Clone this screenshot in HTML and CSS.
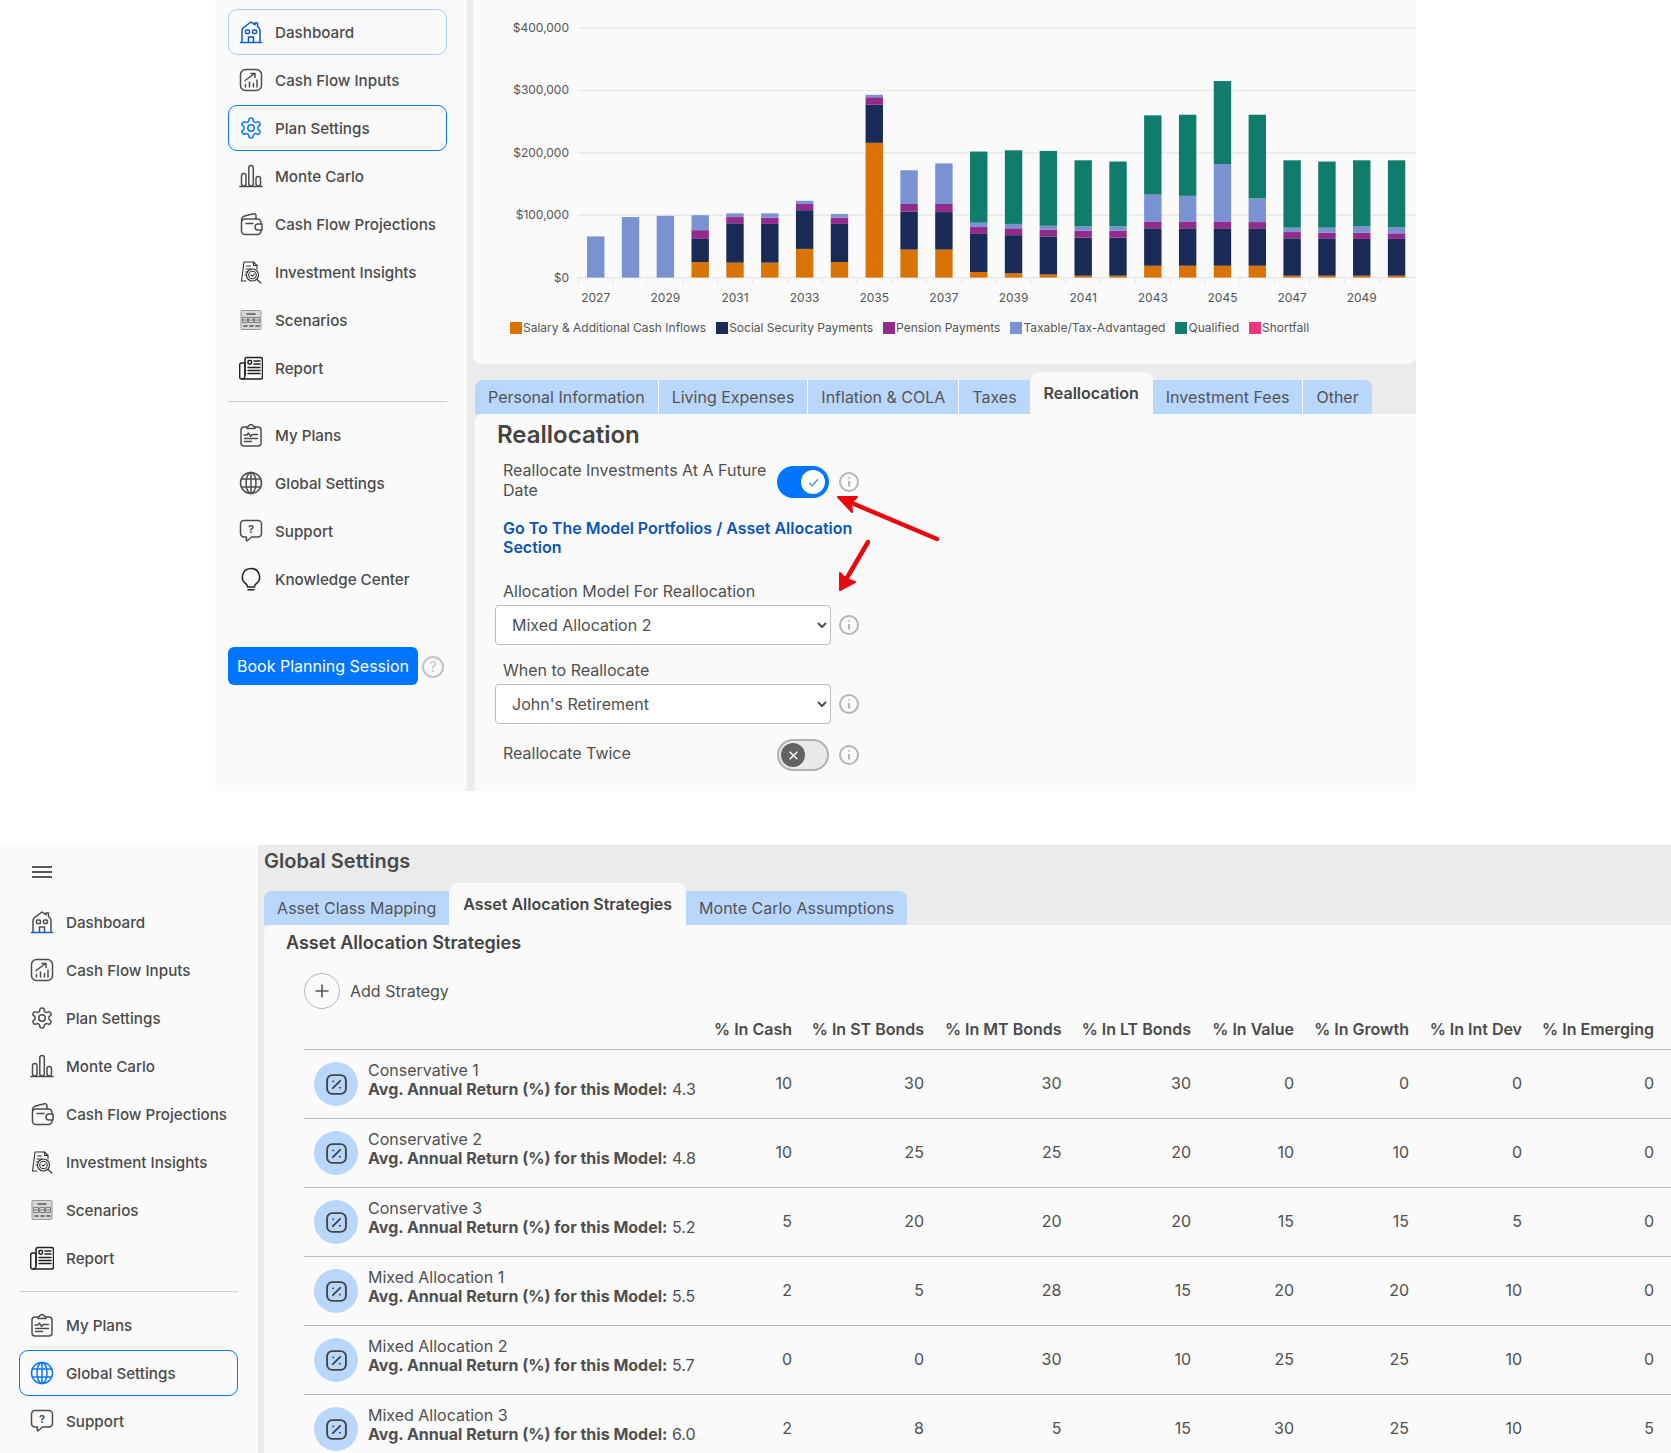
FILE: index.html
```html
<!DOCTYPE html>
<html lang="en">
<head>
    <meta charset="UTF-8">
    <meta name="viewport" content="width=device-width, initial-scale=1.0">
    <title>Plan Settings and Global Settings</title>
    <link rel="stylesheet" href="styles.css">
</head>
<body>
    <svg class="iconDefs" aria-hidden="true">
        <symbol id="i-home" viewBox="0 0 24 24">
            <path d="M3 22V10.5c0-1.2.5-2.200 1.500-2.900L12 2l4 2.800V3h2.500v3.500l1 .9c1 .8 1.500 1.900 1.500 3.100V22"/>
            <rect x="6.500" y="10" width="4" height="3.500" rx="1"/>
            <rect x="13.500" y="10" width="4" height="3.500" rx="1"/>
            <path d="M9.500 22v-5h5v5"/>
            <path d="M1.500 22.500h21" stroke="#0a66d8"/>
        </symbol>
        <symbol id="i-flow" viewBox="0 0 24 24">
            <rect x="1.500" y="1.500" width="21" height="21" rx="5"/>
            <path d="M6.500 19v-2.500M10.500 19v-5M14.500 19v-3.500M18 19v-7"/>
            <path d="M6 12.500l9-6.500M12 5.500h4v4"/>
        </symbol>
        <symbol id="i-gear" viewBox="0 0 24 24">
            <path d="M12.220 2h-.44a2 2 0 0 0-2 2v.18a2 2 0 0 1-1 1.730l-.43.25a2 2 0 0 1-2 0l-.15-.08a2 2 0 0 0-2.730.73l-.22.38a2 2 0 0 0 .73 2.730l.15.1a2 2 0 0 1 1 1.720v.51a2 2 0 0 1-1 1.740l-.15.09a2 2 0 0 0-.73 2.730l.22.38a2 2 0 0 0 2.730.73l.15-.08a2 2 0 0 1 2 0l.43.25a2 2 0 0 1 1 1.730V20a2 2 0 0 0 2 2h.44a2 2 0 0 0 2-2v-.18a2 2 0 0 1 1-1.730l.43-.25a2 2 0 0 1 2 0l.15.08a2 2 0 0 0 2.730-.73l.22-.39a2 2 0 0 0-.73-2.730l-.15-.08a2 2 0 0 1-1-1.740v-.5a2 2 0 0 1 1-1.740l.15-.09a2 2 0 0 0 .73-2.730l-.22-.38a2 2 0 0 0-2.730-.73l-.15.08a2 2 0 0 1-2 0l-.43-.25a2 2 0 0 1-1-1.730V4a2 2 0 0 0-2-2z"/>
            <circle cx="12" cy="12" r="3.200"/>
        </symbol>
        <symbol id="i-bars" viewBox="0 0 24 24">
            <rect x="2.500" y="9.500" width="4.500" height="12.500" rx="2.200"/>
            <rect x="9.800" y="1.500" width="4.500" height="20.500" rx="2.200"/>
            <rect x="17" y="12.500" width="4.500" height="9.500" rx="2.200"/>
            <path d="M.8 22.500h22.400"/>
        </symbol>
        <symbol id="i-wallet" viewBox="0 0 24 24">
            <path d="M2.500 9c0-3 1-4.500 3-5l9-2.200c1.500-.3 2.500.5 2.500 2V7"/>
            <path d="M22 12V10.500a3.500 3.500 0 0 0-3.500-3.500H6A3.500 3.500 0 0 0 2.500 10.500V19A3.500 3.500 0 0 0 6 22.500h12.500A3.500 3.500 0 0 0 22 19v-1"/>
            <path d="M23 12h-4a3 3 0 0 0 0 6h4zM7 11.500h7"/>
        </symbol>
        <symbol id="i-insight" viewBox="0 0 24 24">
            <path d="M7 21H2.500L5 2h9.500L18 5.500V9"/>
            <path d="M14.500 2v3.500H18M7.500 6h4M7 9h5M6.500 12h2M6 15h1.500"/>
            <circle cx="13.500" cy="15" r="6"/>
            <circle cx="13.500" cy="15" r="3.800"/>
            <path d="M12 15l1.200 1.200 2-2.200M18 19.500l4 3.500" />
        </symbol>
        <symbol id="i-scenario" viewBox="0 0 24 24">
            <rect x="2" y="2.500" width="20" height="19" rx="1" fill="#d6d6d6" stroke="#999" stroke-width="1"/>
            <path d="M8 6h8" stroke="#555"/>
            <path d="M4 9.500h4.500v5H4zM10 9.500h4.500v5H10zM16 9.500h4.500v5H16zM4 12h16.500" stroke="#777" stroke-width=".9"/>
            <path d="M5 18h3M11 18h3M17 18h3" stroke="#555"/>
        </symbol>
        <symbol id="i-report" viewBox="0 0 24 24">
            <path d="M6 19V3.500A2 2 0 0 1 8 1.500h13.500a2 2 0 0 1 2 2V21a2 2 0 0 1-2 2H3"/>
            <path d="M6 7H2.500a2 2 0 0 0-1.800 2v12a2 2 0 0 0 2 2 3 3 0 0 0 3.300-3z"/>
            <rect x="9" y="4.500" width="3.500" height="3.500" rx="1"/>
            <path d="M15 5h6M15 8h6M9 11.500h12M9 14.500h12M9 17.500h12"/>
        </symbol>
        <symbol id="i-plans" viewBox="0 0 24 24">
            <path d="M8 4H5a3 3 0 0 0-3 3v13a3 3 0 0 0 3 3h14a3 3 0 0 0 3-3V7a3 3 0 0 0-3-3h-3"/>
            <path d="M8 5.500V4c1-.3 1.800-.5 2-1.500.5-1.500 3.500-1.500 4 0 .2 1 1 1.200 2 1.500v1.500z"/>
            <path d="M5 12h3l1.500-2 2 3.500 1.500-2h5.500M5.500 15.500h13M5.500 18.500h7"/>
        </symbol>
        <symbol id="i-globe" viewBox="0 0 24 24">
            <circle cx="12" cy="12" r="10.500"/>
            <ellipse cx="12" cy="12" rx="5" ry="10.500"/>
            <path d="M2.300 8h19.400M2.300 16h19.400M12 1.500v21"/>
        </symbol>
        <symbol id="i-help" viewBox="0 0 24 24">
            <path d="M5 1.500h14a3.500 3.500 0 0 1 3.500 3.500v9.500a3.500 3.500 0 0 1-3.500 3.500h-6.500l-4 3.500c-.8.500-1.300 0-1.200-.8l.2-2.700H5a3.500 3.500 0 0 1-3.500-3.500V5A3.500 3.500 0 0 1 5 1.500z"/>
            <text x="12" y="14" class="helpMark">?</text>
        </symbol>
        <symbol id="i-bulb" viewBox="0 0 24 24">
            <path d="M12 1.500a8.500 8.500 0 0 0-5 15.400c1 .8 1.500 1.600 1.500 3h7c0-1.400.5-2.200 1.500-3A8.500 8.500 0 0 0 12 1.500z"/>
            <path d="M9 22.800h6"/>
        </symbol>
        <symbol id="i-info" viewBox="0 0 20 20">
            <circle cx="10" cy="10" r="9"/>
            <path d="M10 9v5.500M10 5.500v1.200"/>
        </symbol>
    </svg>

    <section class="shot shotTop">
        <aside class="sidebar">
            <nav class="navList">
                <a class="navItem navSoft"><svg class="icon iconDark"><use href="#i-home"/></svg>Dashboard</a>
                <a class="navItem"><svg class="icon"><use href="#i-flow"/></svg>Cash Flow Inputs</a>
                <a class="navItem navActive"><svg class="icon iconBlue"><use href="#i-gear"/></svg>Plan Settings</a>
                <a class="navItem"><svg class="icon"><use href="#i-bars"/></svg>Monte Carlo</a>
                <a class="navItem"><svg class="icon"><use href="#i-wallet"/></svg>Cash Flow Projections</a>
                <a class="navItem"><svg class="icon iconThin"><use href="#i-insight"/></svg>Investment Insights</a>
                <a class="navItem"><svg class="icon"><use href="#i-scenario"/></svg>Scenarios</a>
                <a class="navItem"><svg class="icon iconBlack"><use href="#i-report"/></svg>Report</a>
            </nav>
            <hr class="navRule">
            <nav class="navList">
                <a class="navItem"><svg class="icon"><use href="#i-plans"/></svg>My Plans</a>
                <a class="navItem"><svg class="icon"><use href="#i-globe"/></svg>Global Settings</a>
                <a class="navItem"><svg class="icon"><use href="#i-help"/></svg>Support</a>
                <a class="navItem"><svg class="icon iconBlack"><use href="#i-bulb"/></svg>Knowledge Center</a>
            </nav>
            <div class="bookRow">
                <button class="bookBtn">Book Planning Session</button>
                <span class="helpCircle">?</span>
            </div>
        </aside>

        <main class="mainArea">
            <div class="chartCard">
                <div id="chart"></div>
                <div class="legend">
                    <span class="legendItem"><i class="swatch fillSalary"></i>Salary &amp; Additional Cash Inflows</span>
                    <span class="legendItem"><i class="swatch fillSocial"></i>Social Security Payments</span>
                    <span class="legendItem"><i class="swatch fillPension"></i>Pension Payments</span>
                    <span class="legendItem"><i class="swatch fillTaxable"></i>Taxable/Tax-Advantaged</span>
                    <span class="legendItem"><i class="swatch fillQualified"></i>Qualified</span>
                    <span class="legendItem"><i class="swatch fillShortfall"></i>Shortfall</span>
                </div>
            </div>

            <div class="tabs tabsTop">
                <a class="tab">Personal Information</a>
                <a class="tab">Living Expenses</a>
                <a class="tab">Inflation &amp; COLA</a>
                <a class="tab">Taxes</a>
                <a class="tab tabActive">Reallocation</a>
                <a class="tab">Investment Fees</a>
                <a class="tab">Other</a>
            </div>

            <div class="panel formPanel">
                <h2 class="formTitle">Reallocation</h2>
                <div class="toggleRow">
                    <span class="toggleLabel">Reallocate Investments At A Future Date</span>
                    <span class="toggle toggleOn"><span class="knob">
                        <svg viewBox="0 0 12 12"><path d="M2 6.500l2.800 2.500L10 3"/></svg>
                    </span></span>
                    <svg class="info"><use href="#i-info"/></svg>
                </div>
                <a class="modelLink">Go To The Model Portfolios / Asset Allocation Section</a>
                <label class="fieldLabel firstField">Allocation Model For Reallocation</label>
                <div class="selectRow">
                    <select class="fieldSelect"><option>Mixed Allocation 2</option></select>
                    <svg class="info"><use href="#i-info"/></svg>
                </div>
                <label class="fieldLabel">When to Reallocate</label>
                <div class="selectRow">
                    <select class="fieldSelect"><option>John's Retirement</option></select>
                    <svg class="info"><use href="#i-info"/></svg>
                </div>
                <div class="toggleRow twiceRow">
                    <span class="toggleLabel">Reallocate Twice</span>
                    <span class="toggle toggleOff"><span class="knob">
                        <svg viewBox="0 0 12 12"><path d="M2.500 2.500l7 7M9.500 2.500l-7 7"/></svg>
                    </span></span>
                    <svg class="info"><use href="#i-info"/></svg>
                </div>
            </div>
        </main>

        <svg class="arrows" viewBox="0 0 1201 791">
            <path d="M722 539L632 501"/>
            <path class="arrowHead" d="M623 497L642 497L636 503L637 512z"/>
            <path d="M653 542L629 583"/>
            <path class="arrowHead" d="M625 590L625 573L631 579L640 582z"/>
        </svg>
    </section>

    <section class="shot shotBottom">
        <aside class="sidebar sidebarWide">
            <div class="burger"><span></span><span></span><span></span></div>
            <nav class="navList">
                <a class="navItem"><svg class="icon"><use href="#i-home"/></svg>Dashboard</a>
                <a class="navItem"><svg class="icon"><use href="#i-flow"/></svg>Cash Flow Inputs</a>
                <a class="navItem"><svg class="icon"><use href="#i-gear"/></svg>Plan Settings</a>
                <a class="navItem"><svg class="icon"><use href="#i-bars"/></svg>Monte Carlo</a>
                <a class="navItem"><svg class="icon"><use href="#i-wallet"/></svg>Cash Flow Projections</a>
                <a class="navItem"><svg class="icon iconThin"><use href="#i-insight"/></svg>Investment Insights</a>
                <a class="navItem"><svg class="icon"><use href="#i-scenario"/></svg>Scenarios</a>
                <a class="navItem"><svg class="icon iconBlack"><use href="#i-report"/></svg>Report</a>
            </nav>
            <hr class="navRule">
            <nav class="navList">
                <a class="navItem"><svg class="icon"><use href="#i-plans"/></svg>My Plans</a>
                <a class="navItem navActive"><svg class="icon iconBlue"><use href="#i-globe"/></svg>Global Settings</a>
                <a class="navItem"><svg class="icon"><use href="#i-help"/></svg>Support</a>
            </nav>
        </aside>

        <main class="mainArea settingsArea">
            <h1 class="pageTitle">Global Settings</h1>
            <div class="tabs">
                <a class="tab">Asset Class Mapping</a>
                <a class="tab tabActive">Asset Allocation Strategies</a>
                <a class="tab">Monte Carlo Assumptions</a>
            </div>
            <div class="panel strategyPanel">
                <h2 class="strategyTitle">Asset Allocation Strategies</h2>
                <div class="addRow"><span class="addCircle">
                    <svg viewBox="0 0 16 16"><path d="M8 1.500v13M1.500 8h13"/></svg>
                </span>Add Strategy</div>
                <div class="strategyTable">
                    <div class="gridRow headRow">
                        <span></span>
                        <span>% In Cash</span><span>% In ST Bonds</span><span>% In MT Bonds</span><span>% In LT Bonds</span>
                        <span>% In Value</span><span>% In Growth</span><span>% In Int Dev</span><span>% In Emerging</span>
                    </div>
                    <div id="strategyRows"></div>
                </div>
            </div>
        </main>
    </section>

    <script src="script.js"></script>
</body>
</html>
```

FILE: styles.css
```css
body {
    margin: 0;
    font-family: "Inter", "Liberation Sans", sans-serif;
    background-color: #ffffff;
    color: #4f4f4f;
}

.iconDefs {
    display: none;
}

.shot {
    display: flex;
    overflow: hidden;
    position: relative;
}

.shotTop {
    width: 1201px;
    height: 791px;
    margin-left: 215px;
}

.shotBottom {
    height: 608px;
    margin-top: 54px;
}

/* sidebar */
.sidebar {
    flex: none;
    width: 252px;
    box-sizing: border-box;
    padding: 9px 0 0 13px;
    background-color: #fafafa;
}

.sidebarWide {
    width: 258px;
    padding: 0 0 0 19px;
}

.burger {
    display: flex;
    flex-direction: column;
    gap: 3px;
    width: 20px;
    margin: 21px 0 21px 13px;
}

.burger span {
    height: 2px;
    background-color: #555;
}

.navList {
    display: flex;
    flex-direction: column;
    gap: 2px;
}

.navItem {
    display: flex;
    align-items: center;
    gap: 12px;
    box-sizing: border-box;
    width: 219px;
    height: 46px;
    padding-left: 10px;
    border: 1px solid transparent;
    border-radius: 9px;
    font-size: 15.2px;
    font-weight: 500;
    color: #4a4a4a;
}

.navSoft {
    border-color: #aecaef;
}

.navActive {
    border-color: #0a78f5;
}

.icon {
    flex: none;
    width: 24px;
    height: 24px;
    fill: none;
    stroke: #4d4d4d;
    stroke-width: 1.5;
    stroke-linecap: round;
    stroke-linejoin: round;
}

.iconDark {
    stroke: #0d5cb8;
}

.iconBlue {
    stroke: #0a78f5;
}

.iconThin {
    stroke: #333;
    stroke-width: 1.1;
}

.iconBlack {
    stroke: #222;
}

.helpMark {
    font-size: 11px;
    font-weight: 700;
    text-anchor: middle;
    fill: #4d4d4d;
    stroke: none;
}

.navRule {
    width: 219px;
    height: 1px;
    margin: 10px 0 10px;
    border: none;
    background-color: #cfcfcf;
}

.bookRow {
    display: flex;
    align-items: center;
    gap: 4px;
    margin-top: 45px;
}

.bookBtn {
    width: 190px;
    height: 38px;
    padding: 0;
    border: none;
    border-radius: 6px;
    background-color: #0075ff;
    color: #ffffff;
    font-family: inherit;
    font-size: 16px;
}

.helpCircle {
    width: 18px;
    height: 18px;
    margin-top: 2px;
    border: 2px solid #c4c4c4;
    border-radius: 50%;
    color: #c4c4c4;
    font-size: 14px;
    line-height: 18px;
    text-align: center;
}

/* main */
.mainArea {
    flex: 1;
    min-width: 0;
    padding-left: 6px;
    background-color: #ebebeb;
}

.chartCard {
    height: 364px;
    border-radius: 0 0 8px 8px;
    background-color: #fafafa;
}

#chart svg {
    display: block;
}

.axisText {
    font-size: 12px;
    fill: #555;
}

.gridLine {
    stroke: #e9e9e9;
    stroke-width: 1.5;
}

.tickLine {
    stroke: #e4e4e4;
    stroke-width: 1;
}

.fillSalary { fill: #d97305; background-color: #d97305; }
.fillSocial { fill: #1a2a56; background-color: #1a2a56; }
.fillPension { fill: #922b8c; background-color: #922b8c; }
.fillTaxable { fill: #7a92d2; background-color: #7a92d2; }
.fillQualified { fill: #107c6b; background-color: #107c6b; }
.fillShortfall { fill: #f0357f; background-color: #f0357f; }

.legend {
    display: flex;
    gap: 10px;
    margin-top: 10px;
    padding-left: 37px;
    font-size: 12px;
    line-height: 16px;
    color: #555;
}

.legendItem {
    display: flex;
    align-items: center;
    gap: 1px;
}

.swatch {
    width: 12px;
    height: 12px;
}

/* tabs */
.tabs {
    display: flex;
    align-items: flex-end;
    height: 42px;
}

.tabsTop {
    margin: 8px 0 0 2px;
}

.tab {
    height: 34px;
    padding: 0 12.9px 0 13.1px;
    border-right: 1px solid #fafafa;
    background-color: #b9d6fb;
    font-size: 16px;
    line-height: 34px;
    color: #555;
}

.tab:first-child {
    border-top-left-radius: 8px;
}

.tab:last-child {
    border-right: none;
    border-top-right-radius: 8px;
}

.tabActive {
    height: 42px;
    border-right: 1px solid transparent;
    border-radius: 8px 8px 0 0;
    background-color: #fafafa;
    font-weight: 600;
    line-height: 42px;
    color: #444;
}

.panel {
    border-top-left-radius: 8px;
    background-color: #fafafa;
}

/* reallocation form */
.formPanel {
    height: 377px;
    box-sizing: border-box;
    margin-left: 2px;
    padding: 6px 0 0 28px;
}

.formTitle {
    margin: 0 0 10px -6px;
    font-size: 24px;
    font-weight: 600;
    line-height: 30px;
    color: #444;
}

.toggleRow {
    display: flex;
    align-items: flex-start;
    font-size: 16px;
    line-height: 20px;
}

.toggleLabel {
    width: 274px;
}

.toggle {
    display: flex;
    align-items: center;
    box-sizing: border-box;
    width: 52px;
    height: 32px;
    margin-top: 6px;
    border-radius: 16px;
}

.toggleOn {
    justify-content: flex-end;
    padding-right: 4px;
    background-color: #0075ff;
}

.toggleOff {
    padding-left: 2px;
    border: 2px solid #b0b0b0;
    background-color: #e9e9e9;
}

.knob {
    display: flex;
    align-items: center;
    justify-content: center;
    width: 24px;
    height: 24px;
    border-radius: 50%;
    background-color: #ffffff;
}

.knob svg {
    width: 13px;
    height: 13px;
    fill: none;
    stroke: #4a8fe8;
    stroke-width: 1.3;
}

.toggleOff .knob {
    background-color: #636363;
}

.toggleOff .knob svg {
    stroke: #ffffff;
}

.info {
    flex: none;
    width: 20px;
    height: 20px;
    margin: 12px 0 0 10px;
    fill: none;
    stroke: #b5b5b5;
    stroke-width: 2;
}

.modelLink {
    display: block;
    width: 360px;
    margin-top: 19px;
    font-size: 16px;
    font-weight: 600;
    line-height: 19px;
    color: #0a55b5;
}

.fieldLabel {
    display: block;
    margin-top: 15px;
    font-size: 16px;
    line-height: 20px;
}

.firstField {
    margin-top: 24px;
}

.selectRow {
    display: flex;
    align-items: center;
    margin: 4px 0 0 -8px;
}

.selectRow .info {
    margin-top: 0;
    margin-left: 8px;
}

.fieldSelect {
    width: 336px;
    height: 40px;
    padding-left: 12px;
    border: 1px solid #bdbdbd;
    border-radius: 4px;
    background-color: #ffffff;
    font-family: inherit;
    font-size: 16px;
    color: #4f4f4f;
}

.twiceRow {
    margin-top: 9px;
}

.twiceRow .toggleLabel {
    margin-top: 10px;
}

/* global settings */
.settingsArea {
    padding-top: 4px;
}

.pageTitle {
    margin: 0 0 10px;
    font-size: 20px;
    font-weight: 600;
    line-height: 24px;
    color: #4a4a4a;
}

.strategyPanel {
    height: 528px;
    box-sizing: border-box;
    padding: 6px 0 0 22px;
}

.strategyTitle {
    margin: 0;
    font-size: 18px;
    font-weight: 600;
    line-height: 24px;
    color: #444;
}

.addRow {
    display: flex;
    align-items: center;
    gap: 10px;
    margin: 18px 0 0 18px;
    font-size: 16px;
}

.addCircle {
    display: flex;
    align-items: center;
    justify-content: center;
    width: 34px;
    height: 34px;
    border: 1px solid #b8b8b8;
    border-radius: 50%;
}

.addCircle svg {
    width: 16px;
    height: 16px;
    fill: none;
    stroke: #555;
    stroke-width: 1.600;
}

.strategyTable {
    margin-left: 18px;
}

.gridRow {
    display: grid;
    grid-template-columns: 400px 88px 132px 137.5px 129.5px 103px 115px 113px 132px;
    align-items: center;
    box-sizing: border-box;
    border-bottom: 1px solid #bcbcbc;
    font-size: 16px;
    text-align: right;
}

.headRow {
    height: 41px;
    padding-bottom: 1px;
    font-weight: 600;
    color: #4a4a4a;
}

.dataRow {
    height: 69px;
}

.dataRow > span {
    padding-bottom: 2px;
}

.strategyName {
    display: flex;
    align-items: center;
    gap: 10px;
    padding-left: 10px;
    line-height: 19px;
    text-align: left;
    white-space: nowrap;
}

.strategyName > div {
    margin-bottom: 8px;
}

.strategyName strong {
    font-weight: 650;
}

.percentBadge {
    flex: none;
    display: flex;
    align-items: center;
    justify-content: center;
    width: 44px;
    height: 44px;
    border-radius: 50%;
    background-color: #b9d6fb;
}

.percentBadge svg {
    width: 23px;
    height: 23px;
    fill: none;
    stroke: #444;
    stroke-width: 1.800;
    stroke-linecap: round;
}

/* red hand drawn arrows on top of the form */
.arrows {
    position: absolute;
    top: 0;
    left: 0;
    width: 1201px;
    height: 791px;
    fill: none;
    stroke: #e8090f;
    stroke-width: 4.500;
    stroke-linecap: round;
    pointer-events: none;
}

.arrows .arrowHead {
    fill: #e8090f;
    stroke-width: 2;
    stroke-linejoin: round;
}
```

FILE: script.js
```js
// values in $1000s: salary, social security, pension, taxable, qualified
const chartData = [
    [2027, 0, 0, 0, 66, 0], [2028, 0, 0, 0, 97, 0], [2029, 0, 0, 0, 99, 0],
    [2030, 25, 37, 14, 24, 0], [2031, 24, 63, 10, 6, 0], [2032, 24, 62, 10, 7, 0],
    [2033, 46, 62, 10, 5, 0], [2034, 25, 61, 10, 6, 0], [2035, 216, 61, 12, 4, 0],
    [2036, 45, 61, 12, 54, 0], [2037, 45, 60, 13, 65, 0], [2038, 9, 61, 11, 7, 114],
    [2039, 7, 61, 11, 7, 118], [2040, 5, 61, 11, 6, 120], [2041, 3, 61, 11, 7, 106],
    [2042, 3, 61, 11, 7, 104], [2043, 19, 60, 11, 43, 127], [2044, 19, 60, 11, 41, 130],
    [2045, 19, 60, 11, 92, 133], [2046, 19, 60, 10, 38, 134], [2047, 3, 60, 10, 7, 108],
    [2048, 3, 60, 9, 8, 106], [2049, 3, 59, 10, 10, 106], [2050, 3, 59, 9, 10, 107]
];

const segClasses = ['fillSalary', 'fillSocial', 'fillPension', 'fillTaxable', 'fillQualified'];

const strategies = [
    ['Conservative 1', '4.3', 10, 30, 30, 30, 0, 0, 0, 0],
    ['Conservative 2', '4.8', 10, 25, 25, 20, 10, 10, 0, 0],
    ['Conservative 3', '5.2', 5, 20, 20, 20, 15, 15, 5, 0],
    ['Mixed Allocation 1', '5.5', 2, 5, 28, 15, 20, 20, 10, 0],
    ['Mixed Allocation 2', '5.7', 0, 0, 30, 10, 25, 25, 10, 0],
    ['Mixed Allocation 3', '6.0', 2, 8, 5, 15, 30, 25, 10, 5]
];

const drawChart = () => {
    const left = 105.3, step = 34.82, baseY = 277.6, perK = 0.624, barW = 17.4;
    let out = '';

    [0, 100, 200, 300, 400].forEach((tick) => {
        const y = baseY - tick * perK;
        const label = tick ? '$' + tick + ',000' : '$0';
        out += `<line class="gridLine" x1="105" x2="943" y1="${y}" y2="${y}"/>`;
        out += `<text class="axisText" x="96" y="${y + 4}" text-anchor="end">${label}</text>`;
    });

    chartData.forEach((row, index) => {
        const tickX = left + index * step;
        const x = tickX + (step - barW) / 2;
        let y = baseY;

        out += `<line class="tickLine" x1="${tickX}" x2="${tickX}" y1="${baseY}" y2="${baseY + 6}"/>`;
        row.slice(1).forEach((value, seg) => {
            if (!value) return;
            const h = value * perK;
            y -= h;
            out += `<rect class="${segClasses[seg]}" x="${x}" y="${y}" width="${barW}" height="${h}"/>`;
        });
        if (index % 2 === 0) {
            out += `<text class="axisText" x="${tickX + step / 2}" y="302" text-anchor="middle">${row[0]}</text>`;
        }
    });

    document.getElementById('chart').innerHTML = `<svg width="943" height="310">${out}</svg>`;
};

const drawStrategies = () => {
    const badge = '<svg viewBox="0 0 22 22"><rect x="2" y="2" width="18" height="18" rx="5"/>' +
        '<path d="M7.500 14.500l7-7M7.800 8h.1M14.200 14h.1"/></svg>';

    document.getElementById('strategyRows').innerHTML = strategies.map((item) => {
        const cells = item.slice(2).map((value) => `<span>${value}</span>`).join('');
        return `<div class="gridRow dataRow">
            <div class="strategyName"><span class="percentBadge">${badge}</span>
                <div>${item[0]}<br><strong>Avg. Annual Return (%) for this Model:</strong> ${item[1]}</div>
            </div>${cells}</div>`;
    }).join('');
};

drawChart();
drawStrategies();
```
